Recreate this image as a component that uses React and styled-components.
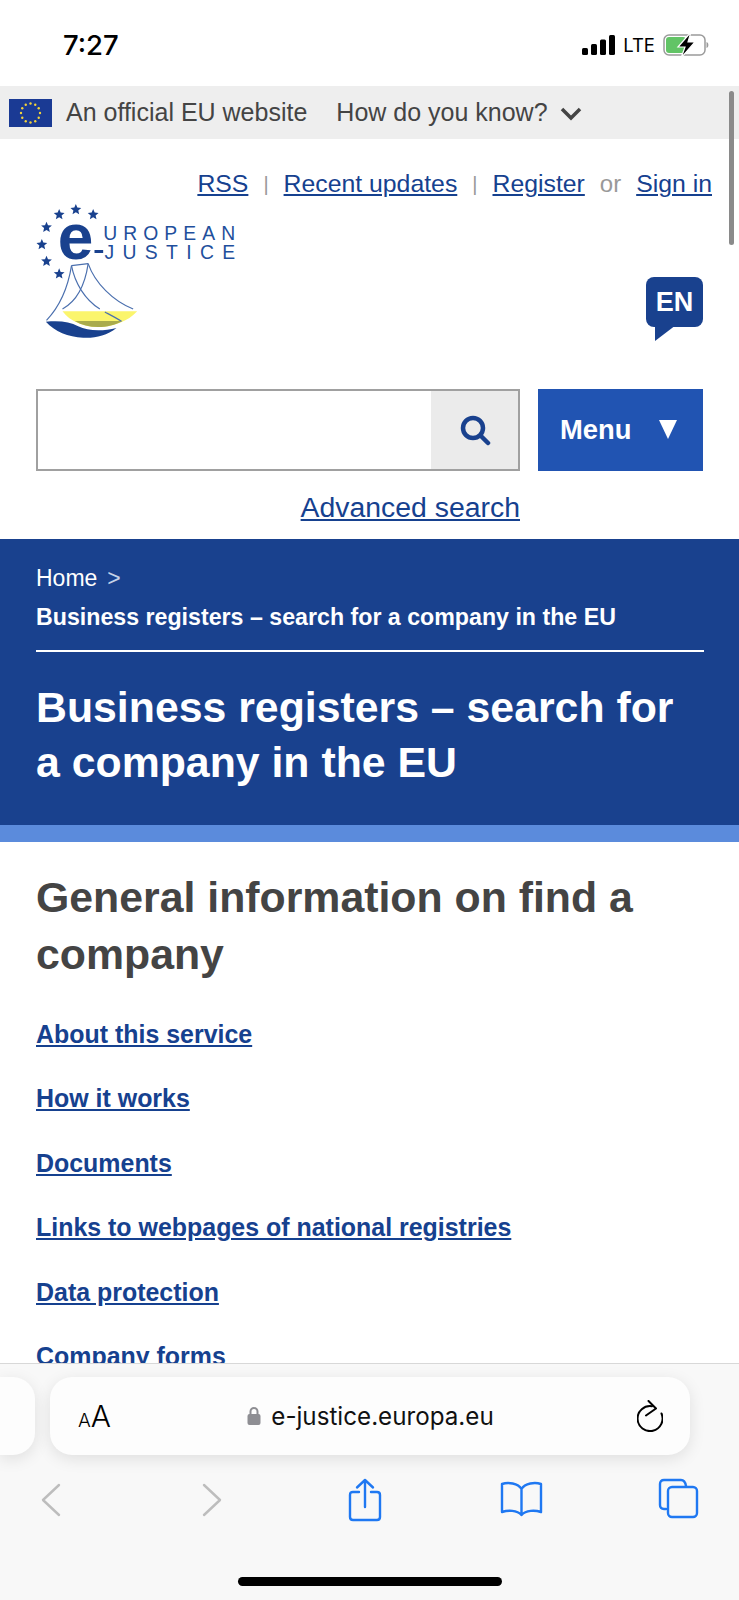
import React from "react";
import styled, { createGlobalStyle } from "styled-components";

const GlobalStyle = createGlobalStyle`
  html, body {
    margin: 0;
    padding: 0;
    background: #fff;
  }
  * {
    box-sizing: border-box;
  }
`;

const Phone = styled.div`
  position: relative;
  width: 739px;
  height: 1600px;
  display: flex;
  flex-direction: column;
  overflow: hidden;
  background: #fff;
  font-family: "Liberation Sans", Arial, sans-serif;
`;

const StatusBar = styled.div`
  height: 86px;
  flex: none;
  display: flex;
  align-items: center;
  justify-content: space-between;
  padding: 4px 30px 0 63px;
`;

const Clock = styled.div`
  font-family: Inter, "Liberation Sans", sans-serif;
  font-size: 27.5px;
  font-weight: 500;
  color: #000;
`;

const StatusIcons = styled.div`
  display: flex;
  align-items: center;
  gap: 8px;
`;

const Lte = styled.span`
  font-family: Inter, "Liberation Sans", sans-serif;
  font-size: 18.5px;
  font-weight: 400;
  color: #000;
`;

const GovBar = styled.div`
  height: 53px;
  flex: none;
  display: flex;
  align-items: center;
  background: #eee;
  padding-left: 9px;
  color: #444;
  font-size: 25px;
`;

const GovLabel = styled.span`
  margin-left: ${(p) => p.$gap}px;
  white-space: nowrap;
`;

const Scrollbar = styled.div`
  position: absolute;
  left: 729px;
  top: 91px;
  width: 5px;
  height: 154px;
  border-radius: 3px;
  background: #8a8a8a;
`;

const Header = styled.header`
  flex: none;
  padding: 32px 27px 18px 36px;
`;

const TopLinks = styled.nav`
  display: flex;
  justify-content: flex-end;
  align-items: center;
  height: 26px;
  font-size: 24.8px;
  color: #999;
`;

const HeaderLink = styled.a`
  color: #16418f;
  text-decoration: underline;
  text-underline-offset: 2px;
`;

const Divider = styled.span`
  margin: 0 15px;
  font-size: ${(p) => (p.$word ? 24 : 20)}px;
  color: #999;
`;

const LogoRow = styled.div`
  display: flex;
  justify-content: space-between;
  align-items: flex-end;
  height: 145px;
  margin: 1px 9px 0 -3px;
`;

const LangBubble = styled.div`
  position: relative;
  width: 57px;
  height: 50px;
  margin-bottom: 16px;
  border-radius: 8px;
  background: #19418e;
  color: #fff;
  font-size: 27px;
  font-weight: 700;
  display: flex;
  align-items: center;
  justify-content: center;

  &::after {
    content: "";
    position: absolute;
    left: 9px;
    top: 48px;
    border-right: 21px solid transparent;
    border-top: 16px solid #19418e;
  }
`;

const SearchRow = styled.div`
  display: flex;
  margin: 46px 9px 0 0;
  height: 82px;
`;

const SearchBox = styled.div`
  width: 484px;
  display: flex;
  justify-content: flex-end;
  border: 2px solid #a0a0a0;
  background: #fff;
`;

const SearchButton = styled.div`
  width: 87px;
  display: flex;
  align-items: center;
  justify-content: center;
  background: #ebebeb;
`;

const MenuButton = styled.div`
  width: 165px;
  margin-left: 18px;
  display: flex;
  align-items: center;
  padding-left: 22px;
  background: #2154b2;
  color: #fff;
  font-size: 27.4px;
  font-weight: 700;
`;

const MenuArrow = styled.span`
  width: 0;
  height: 0;
  margin: -2px 0 0 27px;
  border-left: 9.5px solid transparent;
  border-right: 9.5px solid transparent;
  border-top: 19px solid #fff;
`;

const AdvancedRow = styled.div`
  margin: 22px 192px 0 0;
  height: 28px;
  line-height: 28px;
  text-align: right;
  font-size: 28.4px;
`;

const Hero = styled.section`
  flex: none;
  height: 286px;
  padding: 26px 35px 0 36px;
  background: #19418e;
  color: #fff;
`;

const Crumb = styled.div`
  font-size: 23px;
  line-height: 26px;
`;

const CrumbSep = styled.span`
  margin-left: 10px;
  color: #c5d2e8;
`;

const CrumbCurrent = styled.div`
  margin-top: 13px;
  padding-bottom: 20px;
  border-bottom: 2px solid #fff;
  font-size: 23.2px;
  font-weight: 700;
  line-height: 26px;
`;

const HeroTitle = styled.h1`
  margin: 28px 0 0;
  font-size: 42.8px;
  font-weight: 700;
  line-height: 55px;
`;

const HeroStrip = styled.div`
  flex: none;
  height: 17px;
  background: #5b8bdc;
`;

const Content = styled.main`
  flex: 1;
  min-height: 0;
  overflow: hidden;
  padding: 27px 60px 0 36px;
`;

const SectionTitle = styled.h2`
  margin: 0 0 37px;
  color: #444;
  font-size: 42.8px;
  font-weight: 700;
  line-height: 57px;
`;

const LinkList = styled.div`
  display: flex;
  flex-direction: column;
  align-items: flex-start;
  gap: 36.4px;
`;

const PageLink = styled.a`
  color: #16418f;
  font-size: 24.95px;
  font-weight: 700;
  line-height: 28px;
  text-decoration: underline;
  text-underline-offset: 2px;
`;

const SafariBar = styled.footer`
  flex: none;
  height: 237px;
  display: flex;
  flex-direction: column;
  background: #f8f8f8;
  border-top: 1px solid #d8d8d8;
`;

const PillRow = styled.div`
  display: flex;
  gap: 15px;
  height: 78px;
  margin-top: 13px;
`;

const GhostPill = styled.div`
  width: 35px;
  border-radius: 0 22px 22px 0;
  background: #fdfdfd;
  box-shadow: 0 4px 16px rgba(0, 0, 0, 0.1);
`;

const UrlPill = styled.div`
  width: 640px;
  display: flex;
  align-items: center;
  padding: 0 27px 0 28px;
  border-radius: 22px;
  background: #fdfdfd;
  box-shadow: 0 4px 16px rgba(0, 0, 0, 0.1);
`;

const TextSize = styled.div`
  display: flex;
  align-items: baseline;
  width: 36px;
  color: #000;
  font-family: Inter, "Liberation Sans", sans-serif;
  font-weight: 300;
`;

const SmallA = styled.span`
  font-size: 19px;
`;

const BigA = styled.span`
  font-size: 30px;
`;

const UrlText = styled.div`
  flex: 1;
  display: flex;
  align-items: center;
  justify-content: center;
  gap: 10px;
  padding-right: 10px;
  color: #111;
  font-family: Inter, "Liberation Sans", sans-serif;
  font-size: 24.2px;
`;

const ToolRow = styled.div`
  display: flex;
  align-items: center;
  height: 44px;
  margin-top: 23px;
  padding-left: 41px;
`;

const ToolIcon = styled.svg`
  flex: none;
  margin-left: ${(p) => p.$gap}px;
  margin-top: ${(p) => p.$lift || 0}px;
  fill: none;
  stroke: ${(p) => (p.$off ? "#bdbdbd" : "#1f78f2")};
  stroke-width: 2.4;
  stroke-linecap: round;
  stroke-linejoin: round;
`;

const HomeBar = styled.div`
  width: 264px;
  height: 9px;
  margin: 55px 0 0 238px;
  border-radius: 5px;
  background: #000;
`;

const SignalBars = () => (
  <svg width="33" height="20" viewBox="0 0 33 20">
    <rect x="0" y="13" width="6" height="7" rx="1.5" fill="#000" />
    <rect x="9" y="9" width="6" height="11" rx="1.5" fill="#000" />
    <rect x="18" y="4.5" width="6" height="15.5" rx="1.5" fill="#000" />
    <rect x="27" y="0" width="6" height="20" rx="1.5" fill="#000" />
  </svg>
);

const Battery = () => (
  <svg width="46" height="26" viewBox="0 0 46 26">
    <rect x="1" y="3" width="41" height="20" rx="5" fill="#fff" stroke="#9b9b9b" strokeWidth="1.5" />
    <rect x="3" y="5" width="20" height="16" rx="3" fill="#62c466" />
    <path d="M43.5 10c2.5 .5 2.5 5.5 0 6z" fill="#9b9b9b" />
    <path d="M28 0 L15 15 H22 L18 26 L32 10 H25 Z" fill="#000" stroke="#fff" strokeWidth="1.2" />
  </svg>
);

const EuFlag = () => {
  const stars = new Array(12).fill().map((_, i) => {
    const a = (i / 12) * Math.PI * 2;
    return (
      <circle
        key={i}
        cx={21.5 + Math.sin(a) * 9.5}
        cy={14 + Math.cos(a) * 9.5}
        r="1.2"
        fill="#f2d33c"
      />
    );
  });
  return (
    <svg width="43" height="28" viewBox="0 0 43 28">
      <rect width="43" height="28" fill="#1a3a94" />
      {stars}
    </svg>
  );
};

const LOGO_STARS = [
  [168, 60],
  [118, 75],
  [220, 75],
  [80, 113],
  [66, 165],
  [80, 215],
  [118, 253]
];

const starPoints = (cx, cy, r) => {
  const pts = [];
  for (let i = 0; i < 10; i++) {
    const rad = i % 2 === 0 ? r : r * 0.45;
    const a = (i / 10) * Math.PI * 2 - Math.PI / 2;
    pts.push(cx + Math.cos(a) * rad + "," + (cy + Math.sin(a) * rad));
  }
  return pts.join(" ");
};

// drawn in the coordinates of a 3x crop of the logo, hence the big numbers
const Logo = () => (
  <svg width="207" height="145" viewBox="40 25 620 435">
    {LOGO_STARS.map(([x, y]) => (
      <polygon key={x + "-" + y} points={starPoints(x, y, 17)} fill="#19418e" />
    ))}
    <text x="114" y="207" fontFamily="Liberation Sans" fontSize="192" fontWeight="700" fill="#19418e">
      e
    </text>
    <text x="250" y="150" fontFamily="Liberation Sans" fontSize="58" fill="#1f4f9c" textLength="396">
      UROPEAN
    </text>
    <rect x="224" y="181" width="26" height="9" fill="#19418e" />
    <text x="254" y="209" fontFamily="Liberation Sans" fontSize="58" fill="#1f4f9c" textLength="392">
      JUSTICE
    </text>
    <path d="M128 365 H352 C325 395 280 412 235 412 C190 412 150 395 128 365 Z" fill="#fbf56c" />
    <path d="M165 394 H308 C285 407 262 412 235 412 C208 412 185 406 165 394 Z" fill="#a9ab4c" />
    <path d="M78 396 C120 392 150 396 175 410 C205 425 250 425 290 415 C260 438 225 446 190 444 C145 442 105 425 78 396 Z" fill="#19418e" />
    <g fill="none" stroke="#4a6fae" strokeWidth="3.5">
      <path d="M155 228 L205 222" />
      <path d="M155 228 C145 290 120 350 80 392" />
      <path d="M205 222 C195 290 170 335 128 358" />
      <path d="M155 228 C165 280 195 330 240 358" />
      <path d="M205 222 C225 280 280 335 340 358" />
      <path d="M255 367 C270 375 290 385 305 395" />
    </g>
  </svg>
);

const App = () => (
  <Phone>
    <GlobalStyle />
    <StatusBar>
      <Clock>7:27</Clock>
      <StatusIcons>
        <SignalBars />
        <Lte>LTE</Lte>
        <Battery />
      </StatusIcons>
    </StatusBar>

    <GovBar>
      <EuFlag />
      <GovLabel $gap={14}>An official EU website</GovLabel>
      <GovLabel $gap={29}>How do you know?</GovLabel>
      <svg width="22" height="14" viewBox="0 0 22 14" style={{ marginLeft: 12, marginTop: 3 }}>
        <path d="M2 2 L11 11 L20 2" fill="none" stroke="#444" strokeWidth="3.5" />
      </svg>
    </GovBar>

    <Header>
      <TopLinks>
        <HeaderLink>RSS</HeaderLink>
        <Divider>|</Divider>
        <HeaderLink>Recent updates</HeaderLink>
        <Divider>|</Divider>
        <HeaderLink>Register</HeaderLink>
        <Divider $word>or</Divider>
        <HeaderLink>Sign in</HeaderLink>
      </TopLinks>
      <LogoRow>
        <Logo />
        <LangBubble>EN</LangBubble>
      </LogoRow>
      <SearchRow>
        <SearchBox>
          <SearchButton>
            <svg width="32" height="32" viewBox="0 0 32 32">
              <circle cx="14" cy="14" r="10" fill="none" stroke="#19418e" strokeWidth="4.5" />
              <path d="M21.5 21.5 L29 29" stroke="#19418e" strokeWidth="4.5" strokeLinecap="round" />
            </svg>
          </SearchButton>
        </SearchBox>
        <MenuButton>
          Menu
          <MenuArrow />
        </MenuButton>
      </SearchRow>
      <AdvancedRow>
        <HeaderLink>Advanced search</HeaderLink>
      </AdvancedRow>
    </Header>

    <Hero>
      <Crumb>
        Home<CrumbSep>&gt;</CrumbSep>
      </Crumb>
      <CrumbCurrent>Business registers – search for a company in the EU</CrumbCurrent>
      <HeroTitle>Business registers – search for a company in the EU</HeroTitle>
    </Hero>
    <HeroStrip />

    <Content>
      <SectionTitle>General information on find a company</SectionTitle>
      <LinkList>
        <PageLink>About this service</PageLink>
        <PageLink>How it works</PageLink>
        <PageLink>Documents</PageLink>
        <PageLink>Links to webpages of national registries</PageLink>
        <PageLink>Data protection</PageLink>
        <PageLink>Company forms</PageLink>
      </LinkList>
    </Content>

    <SafariBar>
      <PillRow>
        <GhostPill />
        <UrlPill>
          <TextSize>
            <SmallA>A</SmallA>
            <BigA>A</BigA>
          </TextSize>
          <UrlText>
            <svg width="14" height="20" viewBox="0 0 14 20">
              <path d="M3.5 9V5.5a3.5 3.5 0 0 1 7 0V9" fill="none" stroke="#8e8e93" strokeWidth="2" />
              <rect x="0.5" y="8" width="13" height="11" rx="2" fill="#8e8e93" />
            </svg>
            e-justice.europa.eu
          </UrlText>
          <svg width="26" height="32" viewBox="0 0 26 32">
            <path
              d="M15 6.2 A12.5 12.5 0 1 0 24.5 13.5"
              fill="none"
              stroke="#000"
              strokeWidth="2"
              strokeLinecap="round"
            />
            <path d="M11.5 1 L19 8.5 L9 15.5" fill="none" stroke="#000" strokeWidth="2" strokeLinecap="round" strokeLinejoin="round" />
          </svg>
        </UrlPill>
      </PillRow>
      <ToolRow>
        <ToolIcon $off $gap={0} width="20" height="34" viewBox="0 0 20 34">
          <path d="M18 2 L2 17 L18 32" />
        </ToolIcon>
        <ToolIcon $off $gap={141} width="20" height="34" viewBox="0 0 20 34">
          <path d="M2 2 L18 17 L2 32" />
        </ToolIcon>
        <ToolIcon $gap={126} width="34" height="44" viewBox="0 0 34 44">
          <path d="M11 14 H5 Q2 14 2 17 V39 Q2 42 5 42 H29 Q32 42 32 39 V17 Q32 14 29 14 H23" />
          <path d="M17 29 V2 M9 9.5 L17 2 L25 9.5" />
        </ToolIcon>
        <ToolIcon $gap={118} $lift={-3} width="43" height="36" viewBox="0 0 43 36">
          <path d="M21.5 8 C18 2 8 1 2 3 V31 C8 29 17 29 21.5 34 C26 29 35 29 41 31 V3 C35 1 25 2 21.5 8 Z M21.5 8 V34" />
        </ToolIcon>
        <ToolIcon $gap={115} $lift={-3} width="41" height="41" viewBox="0 0 41 41">
          <path d="M8 31 H6 Q2 31 2 27 V6 Q2 2 6 2 H23 Q27 2 28 8" />
          <rect x="10" y="9" width="29" height="30" rx="4" />
        </ToolIcon>
      </ToolRow>
      <HomeBar />
    </SafariBar>

    <Scrollbar />
  </Phone>
);

export default App;
